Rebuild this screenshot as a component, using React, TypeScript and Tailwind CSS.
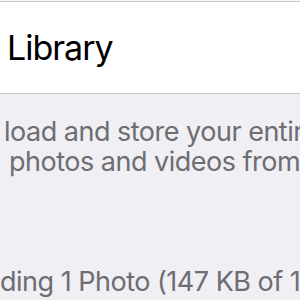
export default function App() {
  const font = { fontFamily: 'Inter, "Noto Sans", sans-serif' };
  return (
    <div className="w-[300px] h-[300px] overflow-hidden bg-[#efeff4] flex flex-col" style={font}>
      <div className="h-[1px] bg-[#f7f7f7]" />
      <div className="h-[1px] bg-[#c8c7cc]" />
      <div className="h-[91px] bg-white flex items-center pl-[7px]">
        <span className="text-[34px] leading-none text-black tracking-[-1px]">Library</span>
      </div>
      <div className="h-[1px] bg-[#c8c7cc]" />
      <div className="flex flex-col text-[27px] leading-[30px] text-[#6d6d72] whitespace-nowrap tracking-[-0.5px] pt-[23px]">
        <div className="pl-[4px]">load and store your entire library</div>
        <div className="pl-[9px]">photos and videos from all your</div>
      </div>
      <div className="text-[27px] leading-[30px] text-[#6d6d72] whitespace-nowrap tracking-[-0.5px] pt-[90px]">
        ding 1 Photo (147 KB of 1.2 MB)
      </div>
    </div>
  );
}
